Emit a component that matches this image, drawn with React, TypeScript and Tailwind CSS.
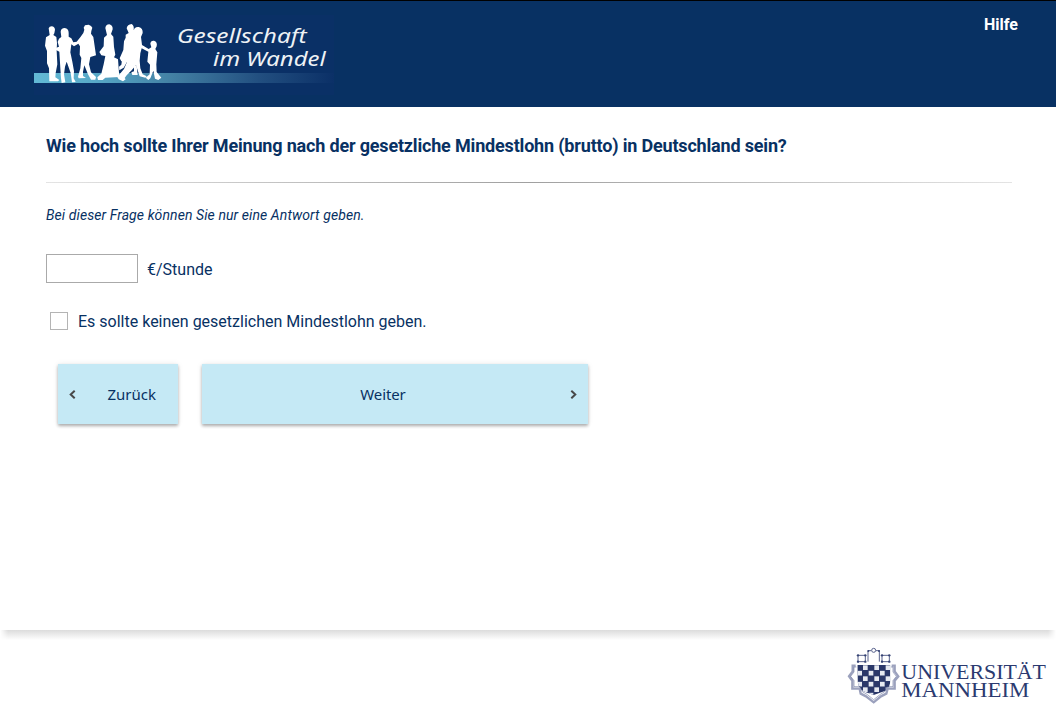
import React from "react";

function SocietyLogo() {
  return (
    <svg width="315" height="85" viewBox="0 0 945 255" role="img" aria-label="Gesellschaft im Wandel">
      <defs>
        <linearGradient id="band" x1="0" x2="1" y1="0" y2="0">
          <stop offset="0" stopColor="#62b9d5" />
          <stop offset="0.2" stopColor="#58a9c8" />
          <stop offset="0.45" stopColor="#4482a5" />
          <stop offset="0.75" stopColor="#224f80" />
          <stop offset="1" stopColor="#0b3067" />
        </linearGradient>
      </defs>
      <rect x="12" y="0" width="900" height="240" fill="#0a3066" />
      <rect x="12" y="174" width="900" height="30" fill="url(#band)" />
      <g fill="#fff">
        <path d="M56 40Q58 34 65 34Q74 35 75 44L73 55L70 60L79 66L81 84L80 108L82 148L77 174L76 187L88 195L84 199H58L57 160L51 145V108L45 92L48 67L59 60Z" />
        <path d="M92 50Q93 39 104 39Q116 41 116 54V65L124 70L130 82L140 80L152 65L160 54L163 44L161 38L165 31L176 29L183 33L187 38L184 48L183 56L190 66L198 121L181 126L177 148L183 172L198 186L196 194L183 194L174 178L163 151L159 170V183L168 189L146 190L144 185L151 160L154 129L149 119L150 94L145 86L132 94L124 88L121 112L127 140L132 168L131 190L137 201L126 202L122 174L110 140L105 155L102 178L106 202L95 204L93 190L91 160L88 110L77 104L79 98L87 95L83 81L87 71L94 66Z" />
        <path d="M226 39Q227 29 238 28Q249 31 248 43L243 57L250 65L252 96L256 119L252 127L264 133L268 186L226 188L218 195H204L202 187L214 176L221 148L226 123L214 121L208 111L221 94L222 68L231 60Z" />
        <path d="M290 40Q292 28 305 27Q313 31 311 46L314 40Q319 35 326 36Q339 39 338 54L333 66L336 90L356 102L364 97L361 86Q362 76 372 77Q383 80 380 94L376 102L382 112L379 148L380 171L394 188L385 195L375 191L370 167L361 190L355 195L347 188L359 178L360 149L352 140L355 110L335 100L331 115L329 137L331 160L338 178L350 184L346 188L329 184L318 151L305 166L290 181L284 189L287 193L279 199L266 193L262 186L282 162L291 141L274 139L269 130L280 105L282 79L287 68L287 59L296 54Z" />
        <path d="M276 136H294L281 158L268 166L267 155L274 149Z" />
        <path d="M312 152H320L323 180H307L304 172L312 169Z" />
      </g>
      <g fill="#eef2f5" className="italic [font-family:'Noto_Sans','Open_Sans',sans-serif]" fontSize="61">
        <text x="441" y="85" textLength="389" lengthAdjust="spacingAndGlyphs">Gesellschaft</text>
        <text x="549" y="154" textLength="338" lengthAdjust="spacingAndGlyphs">im Wandel</text>
      </g>
    </svg>
  );
}

function UniversityLogo() {
  const cells: React.ReactNode[] = [];
  for (let row = 0; row < 6; row++) {
    for (let col = 0; col < 6; col++) {
      if ((row + col) % 2 === 1) {
        cells.push(<rect key={`${row}-${col}`} x={52 + col * 17} y={76 + row * 16.5} width="14" height="14" fill="#e6e9f1" />);
      }
    }
  }
  return (
    <svg width="216" height="71" viewBox="0 0 648 213" role="img" aria-label="Universität Mannheim">
      <defs>
        <clipPath id="shield">
          <path d="M52 75H151V126Q147 152 124 157L101 165L78 157Q57 150 53 125Z" />
        </clipPath>
      </defs>
      <g clipPath="url(#shield)">
        <rect x="50" y="73" width="103" height="94" fill="#2a3769" />
        {cells}
      </g>
      <path d="M47 77H38V94L27 109L37 122V146H59L62 161L78 169L101 187L123 169L139 161L143 146H164V122L175 109L164 94V77H155" fill="none" stroke="#9ba1bd" strokeWidth="7" />
      <path d="M49 81H42V96L32 109L42 122V140H61L67 155L81 163L101 179L121 163L134 155L141 140H159V122L169 109L159 96V81H153" fill="none" stroke="#4d588b" strokeWidth="1.5" />
      <g fill="none" stroke="#59638d" strokeWidth="3">
        <path d="M54 65V46H76V65ZM126 65V46H148V65ZM84 65V32H94M108 32H118V65" />
        <circle cx="101" cy="31" r="6" />
      </g>
      <g fill="#354373">
        <circle cx="54" cy="46" r="3.5" /><circle cx="76" cy="46" r="3.5" />
        <circle cx="54" cy="65" r="3.5" /><circle cx="76" cy="65" r="3.5" />
        <circle cx="126" cy="46" r="3.5" /><circle cx="148" cy="46" r="3.5" />
        <circle cx="126" cy="65" r="3.5" /><circle cx="148" cy="65" r="3.5" />
        <circle cx="85" cy="33" r="3" /><circle cx="117" cy="33" r="3" />
      </g>
      <g fill="#2b3a70" className="[font-family:'Liberation_Serif',serif]" fontSize="60">
        <text x="184" y="117" textLength="434" lengthAdjust="spacingAndGlyphs">UNIVERSITÄT</text>
        <text x="184" y="171" textLength="384" lengthAdjust="spacingAndGlyphs">MANNHEIM</text>
      </g>
    </svg>
  );
}

function Chevron({ left = false }: { left?: boolean }) {
  return (
    <svg width="8" height="10" viewBox="0 0 8 10" fill="none" stroke="#484848" strokeWidth="2">
      <path d={left ? "M5.7 1.7L1.7 5.5L5.7 9.3" : "M2.3 1.7L6.3 5.5L2.3 9.3"} />
    </svg>
  );
}

export default function App() {
  return (
    <div className="flex h-[711px] w-full flex-col overflow-hidden bg-white text-[#083163] [font-family:Roboto,sans-serif]">
      <header className="flex h-[107px] shrink-0 items-start justify-between border-t border-black bg-[#083163] pr-[38px] pl-[30px]">
        <div className="pt-3.5">
          <SocietyLogo />
        </div>
        <a href="#" className="pt-3 text-base leading-6 font-bold text-white">Hilfe</a>
      </header>

      <main className="flex h-[523px] shrink-0 flex-col pr-11 pl-[46px]">
        <h1 className="mt-[27px] text-lg leading-6 font-bold whitespace-nowrap">
          <span className="inline-block tracking-[-0.175px]">Wie hoch sollte Ihrer Meinung nach der gesetzliche Mindestlohn (brutto) in Deutschland sein?</span>
        </h1>
        <div className="mt-6 h-px shrink-0 bg-linear-to-r from-[#e4e4e4] via-[#a0a0a0] to-[#e4e4e4]" />
        <p className="mt-[22px] text-sm leading-5 tracking-[0.09px] italic">Bei dieser Frage können Sie nur eine Antwort geben.</p>
        <label className="mt-[29px] flex h-[29px] items-center gap-[9px] text-base">
          <input type="text" aria-label="€/Stunde" className="h-[29px] w-[92px] border border-[#aaa] bg-white px-2 outline-none" />
          <span className="relative top-px">€/Stunde</span>
        </label>
        <label className="mt-[26px] flex h-6 items-center gap-2.5 pl-1 text-base">
          <input type="checkbox" className="size-[18px] appearance-none border border-[#b4b4b4] bg-white" />
          <span className="pt-0.5">Es sollte keinen gesetzlichen Mindestlohn geben.</span>
        </label>
        <div className="mt-[31px] ml-3 flex gap-6 text-[15px] [font-family:'Noto_Sans','Open_Sans',sans-serif]">
          <button className="flex h-[60px] w-[120px] items-center bg-[#c5e9f5] pr-[22px] pl-[11px] shadow-[0_2px_3px_rgba(0,0,0,0.3),0_0_6px_rgba(0,0,0,0.08)]">
            <Chevron left />
            <span className="ml-auto">Zurück</span>
          </button>
          <button className="flex h-[60px] w-[386px] items-center bg-[#c5e9f5] pr-[11px] shadow-[0_2px_3px_rgba(0,0,0,0.3),0_0_6px_rgba(0,0,0,0.08)]">
            <span className="flex-1 pr-[5px] text-center tracking-[-0.1px]">Weiter</span>
            <Chevron />
          </button>
        </div>
      </main>

      <footer className="flex h-[81px] shrink-0 flex-col items-end">
        <div className="h-2.5 w-full bg-linear-to-b from-[#dcdcdc] via-[#ededed] to-white [mask-image:linear-gradient(to_right,transparent,#000_8px,#000_1048px,transparent)]" />
        <UniversityLogo />
      </footer>
    </div>
  );
}
